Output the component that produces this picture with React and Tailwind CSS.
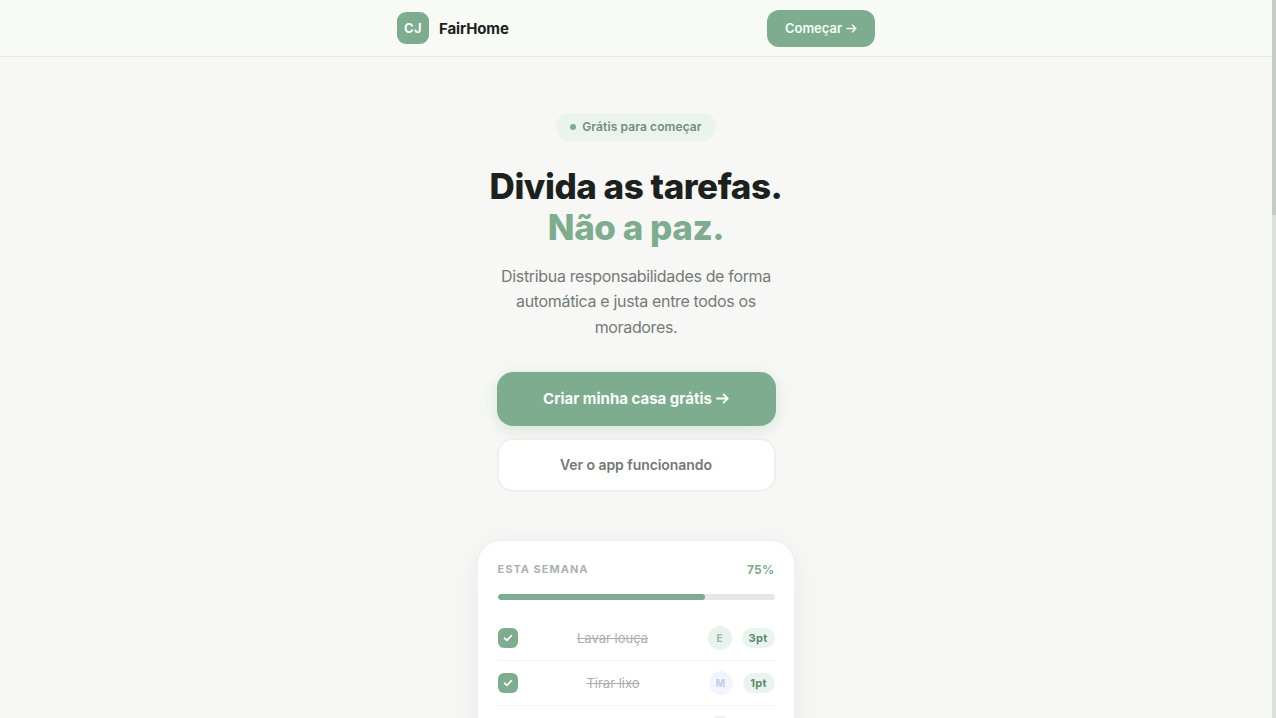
import React from "react";

function Arrow({ className }) {
  return (
    <svg viewBox="0 0 12 12" className={className} fill="none" stroke="currentColor" strokeLinecap="round" strokeLinejoin="round">
      <path d="M1 6h9.8M7 2.2 10.8 6 7 9.8" />
    </svg>
  );
}

const tasks = [
  { name: "Lavar louça", who: "E", points: "3pt", avatar: "bg-[#eaf2ed] text-[#9bb5a5]", pill: "w-[33px]" },
  { name: "Tirar lixo", who: "M", points: "1pt", avatar: "bg-[#f1f5fe] text-[#c3c9ec]", pill: "w-8" },
  { name: "", who: "", points: "", avatar: "bg-[#eaf2ed]", pill: "w-[33px]" },
];

function Task({ task }) {
  return (
    <div className="flex h-[45px] shrink-0 items-center border-b border-[#f4f5f3]">
      <div className="flex size-5 shrink-0 items-center justify-center rounded-[6px] bg-[#7dac8e] text-white">
        <svg viewBox="0 0 10 10" className="size-[10px]" fill="none" stroke="currentColor" strokeWidth="1.7" strokeLinecap="round" strokeLinejoin="round">
          <path d="M1.5 5.2 3.9 7.4 8.4 2.6" />
        </svg>
      </div>
      <span className="ml-[10px] mr-[10px] flex-1 pt-px text-center text-[13px] leading-5 text-[#a9afab] line-through">{task.name}</span>
      <span className={`flex size-6 items-center justify-center rounded-full pt-px text-[10px] font-bold ${task.avatar}`}>{task.who}</span>
      <span className={`ml-[10px] flex h-5 items-center justify-center rounded-full bg-[#eaf4ee] pt-[2px] text-[11px] font-bold tracking-[0.3px] text-[#5a8a6b] ${task.pill}`}>{task.points}</span>
    </div>
  );
}

export default function App() {
  return (
    <div className="flex h-[718px] overflow-hidden bg-[#f7f8f5] font-['Inter',sans-serif] text-[#1c211e]">
      <div className="flex min-w-0 flex-1 flex-col items-center">
        <header className="flex h-[57px] w-full shrink-0 justify-center border-b border-[#e7e9e5] bg-[#f8faf5]">
          <div className="flex h-14 w-[478px] items-center justify-between">
            <div className="flex items-center gap-[10px]">
              <div className="flex size-8 items-center justify-center rounded-[9px] bg-[#7dac8e] pt-px text-[13px] font-bold tracking-[0.3px] text-[#f4fff7]">CJ</div>
              <span className="pt-[2px] text-[15px] font-bold tracking-[-0.12px]">FairHome</span>
            </div>
            <button className="flex h-[37px] w-[108px] items-center justify-center gap-1 rounded-[12px] bg-[#7dac8e] text-[13px] font-semibold text-[#f4fff7]">
              <span className="pt-[2px]">Começar</span>
              <Arrow className="size-[11px] stroke-[1.5]" />
            </button>
          </div>
        </header>

        <main className="flex w-[318px] flex-col items-center">
          <div className="mt-14 flex h-7 w-40 shrink-0 items-center justify-center gap-[6px] rounded-full bg-[#eaf4ed] text-[12px] font-semibold text-[#6e8f7c]">
            <span className="size-[6px] rounded-full bg-[#7dac8e]" />
            <span className="tracking-[0.1px]">Grátis para começar</span>
          </div>
          <h1 className="mt-[25px] whitespace-nowrap text-center text-[35px] font-extrabold leading-[41.4px] tracking-[-0.45px]">
            Divida as tarefas.
            <br />
            <span className="text-[#7dac8e]">Não a paz.</span>
          </h1>
          <p className="mt-[15px] w-[280px] text-center text-[16px] leading-[25.6px] tracking-[-0.34px] text-[#747b77]">
            Distribua responsabilidades de forma automática e justa entre todos os moradores.
          </p>
          <button className="mt-[31px] flex h-[54px] w-[279px] items-center justify-center gap-1 rounded-[16px] bg-[#7dac8e] text-[15px] font-bold text-[#f8fffa] shadow-[0_4px_16px_rgba(125,172,142,0.25)]">
            <span className="pt-[2px]">Criar minha casa grátis</span>
            <Arrow className="size-[13px] stroke-[1.7]" />
          </button>
          <button className="mt-3 flex h-[54px] w-[279px] items-center justify-center rounded-[16px] border-2 border-[#efefec] bg-white text-[14px] font-semibold tracking-[-0.06px] text-[#747775]">
            Ver o app funcionando
          </button>

          <section className="mt-12 w-[318px] shrink-0 rounded-t-[24px] border border-[#f0f1ef] bg-white px-[19.5px] pt-[21px] shadow-[0_6px_28px_rgba(0,0,0,0.06)]">
            <div className="flex h-4 items-center justify-between">
              <span className="text-[11px] font-bold tracking-[1px] text-[#adb2ae]">ESTA SEMANA</span>
              <span className="text-[12px] font-bold tracking-[0.3px] text-[#7dac8e]">75%</span>
            </div>
            <div className="mb-4 mt-4 h-[6px] overflow-hidden rounded-full bg-[#e7e8e5]">
              <div className="h-full w-3/4 rounded-full bg-[#7dac8e]" />
            </div>
            {tasks.map((task, i) => (
              <Task key={i} task={task} />
            ))}
          </section>
        </main>
      </div>
      <div className="h-full w-1 shrink-0 bg-[#dce1dc]">
        <div className="h-[215px] bg-[#c5cbc6]" />
      </div>
    </div>
  );
}
